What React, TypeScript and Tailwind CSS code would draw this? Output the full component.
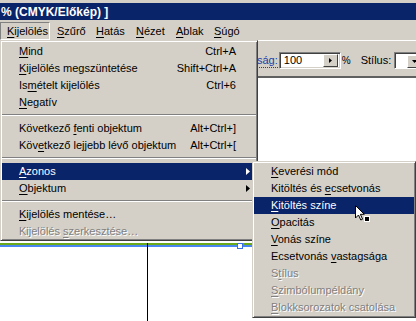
import React from 'react'

type Entry =
  | { sep: true }
  | {
      sep?: false
      text: string
      u: number
      shortcut?: string
      sub?: boolean
      active?: boolean
      disabled?: boolean
    }

const mainMenu: Entry[] = [
  { text: 'Mind', u: 0, shortcut: 'Ctrl+A' },
  { text: 'Kijelölés megszüntetése', u: 0, shortcut: 'Shift+Ctrl+A' },
  { text: 'Ismételt kijelölés', u: 2, shortcut: 'Ctrl+6' },
  { text: 'Negatív', u: 0 },
  { sep: true },
  { text: 'Következő fenti objektum', u: 10, shortcut: 'Alt+Ctrl+]' },
  { text: 'Következő lejjebb lévő objektum', u: 3, shortcut: 'Alt+Ctrl+[' },
  { sep: true },
  { text: 'Azonos', u: 0, sub: true, active: true },
  { text: 'Objektum', u: 0, sub: true },
  { sep: true },
  { text: 'Kijelölés mentése…', u: 0 },
  { text: 'Kijelölés szerkesztése…', u: 10, disabled: true },
]

const subMenu: Entry[] = [
  { text: 'Keverési mód', u: 0 },
  { text: 'Kitöltés és ecsetvonás', u: 12 },
  { text: 'Kitöltés színe', u: 0, active: true },
  { text: 'Opacitás', u: 0 },
  { text: 'Vonás színe', u: 0 },
  { text: 'Ecsetvonás vastagsága', u: 11 },
  { text: 'Stílus', u: 1, disabled: true },
  { text: 'Szimbólumpéldány', u: 0, disabled: true },
  { text: 'Blokksorozatok csatolása', u: 0, disabled: true },
]

const menuBar = [
  { text: 'Kijelölés', w: 'w-[50px]', open: true },
  { text: 'Szűrő', w: 'w-[39px]' },
  { text: 'Hatás', w: 'w-[40px]' },
  { text: 'Nézet', w: 'w-[40px]' },
  { text: 'Ablak', w: 'w-[38px]' },
  { text: 'Súgó', w: 'w-[40px]' },
]

function Label({ text, u }: { text: string; u: number }) {
  return (
    <>
      {text.slice(0, u)}
      <span className="underline decoration-1 underline-offset-[2px]">{text[u]}</span>
      {text.slice(u + 1)}
    </>
  )
}

function Arrow({ white }: { white?: boolean }) {
  return (
    <svg width="4" height="7" viewBox="0 0 4 7" className="absolute right-[6px] top-[5px]">
      <path d="M0 0 L4 3.5 L0 7 Z" fill={white ? '#fff' : '#000'} />
    </svg>
  )
}

function Menu({ items, className }: { items: Entry[]; className: string }) {
  return (
    <div
      className={`absolute bg-[#d4d0c8] border border-t-[#d4d0c8] border-l-[#d4d0c8] border-r-[#404040] border-b-[#404040] shadow-[inset_1px_1px_0_#fff,inset_-1px_-1px_0_#808080] ${className}`}
    >
      {items.map((it, i) =>
        it.sep ? (
          <div key={i} className="h-[9px] pt-[3px]">
            <div className="h-px bg-[#808080]" />
            <div className="h-px bg-white" />
          </div>
        ) : (
          <div
            key={i}
            className={`relative h-[17px] flex items-center pl-[17px] pr-[20px] whitespace-nowrap ${
              it.active ? 'bg-[#0a246a] text-white' : it.disabled ? 'text-[#808080] [text-shadow:1px_1px_0_#fff]' : 'text-black'
            }`}
          >
            <span className="flex-1">
              <Label text={it.text} u={it.u} />
            </span>
            {it.shortcut && <span>{it.shortcut}</span>}
            {it.sub && <Arrow white={it.active} />}
          </div>
        )
      )}
    </div>
  )
}

export default function App() {
  return (
    <div className="relative w-[416px] h-[321px] overflow-hidden bg-white text-[11px] leading-none font-['Liberation_Sans',Arial,sans-serif] select-none">
      <div className="flex flex-col h-full">
        {/* window frame + title */}
        <div className="h-[3px] bg-[#d4d0c8]" />
        <div className="h-[17px] bg-[#0a246a] text-white font-bold text-[12px] flex items-center pl-[1px]">
          % (CMYK/Előkép) ]
        </div>

        {/* menu bar */}
        <div className="h-[20px] bg-[#d4d0c8] flex items-end">
          {menuBar.map((m) => (
            <div
              key={m.text}
              className={`${m.w} h-[18px] flex items-center pl-[6px] ${
                m.open ? 'border border-t-[#808080] border-l-[#808080] border-r-white border-b-white pl-[5px] w-[49px] mr-[1px]' : ''
              }`}
            >
              <Label text={m.text} u={0} />
            </div>
          ))}
        </div>

        {/* toolbar */}
        <div className="h-[38px] bg-[#d4d0c8] border-t border-t-white border-b-2 border-b-[#606060] flex items-start pt-[11px] pl-[257px] whitespace-nowrap overflow-hidden">
          <span className="shrink-0 text-[#2040a8] mt-[3px] pb-[1px] border-b border-dotted border-b-[#2040a8]">ság:</span>
          <div className="shrink-0 ml-[1px] w-[62px] h-[17px] bg-white border border-t-[#808080] border-l-[#808080] border-r-white border-b-white shadow-[inset_1px_1px_0_#404040,inset_-1px_-1px_0_#d4d0c8] flex items-center justify-between pl-[4px] pr-[2px]">
            <span>100</span>
            <div className="w-[15px] h-[13px] bg-[#d4d0c8] border border-t-white border-l-white border-r-[#404040] border-b-[#404040] flex items-center justify-center">
              <svg width="3" height="5" viewBox="0 0 3 5">
                <path d="M0 0 L3 2.5 L0 5 Z" fill="#000" />
              </svg>
            </div>
          </div>
          <span className="shrink-0 ml-[1px] mt-[4px] text-[10px]">%</span>
          <span className="shrink-0 ml-[10px] mt-[3px]">Stílus:</span>
          <div className="shrink-0 ml-[3px] w-[36px] h-[17px] bg-white border border-t-[#808080] border-l-[#808080] border-r-white border-b-white shadow-[inset_1px_1px_0_#404040] flex items-center pl-[12px] pt-[1px]">
            <div className="w-[14px] h-[13px] bg-[#d4d0c8] border border-t-white border-l-white border-r-[#404040] border-b-[#404040] flex items-center justify-center">
              <svg width="5" height="3" viewBox="0 0 5 3">
                <path d="M0 0 L5 0 L2.5 3 Z" fill="#000" />
              </svg>
            </div>
          </div>
        </div>

        {/* canvas */}
        <div className="relative flex-1 bg-white">
          <div className="absolute left-0 right-0 top-[165px] h-[2px] bg-[#6aaa1a]" />
          <div className="absolute left-0 right-0 top-[167px] h-[2px] bg-[#4a86f0]" />
          <div className="absolute left-[147px] top-[165px] bottom-0 w-px bg-black" />
          <div className="absolute left-[237px] top-[165px] w-[6px] h-[6px] bg-white border border-[#3a70e8]" />
        </div>
      </div>

      <Menu items={mainMenu} className="left-0 top-[40px] w-[258px] px-[1px] pt-[2px]" />
      <Menu items={subMenu} className="left-[252px] top-[161px] w-[164px] p-[1px]" />

      {/* mouse pointer */}
      <svg className="absolute left-[355px] top-[205px]" width="16" height="18" viewBox="0 0 16 18">
        <path d="M0.5 0.5 L0.5 13 L3.5 10 L5.8 15 L7.6 14.2 L5.4 9.3 L9.3 9.3 Z" fill="#fff" stroke="#000" strokeWidth="1" />
        <rect x="9.5" y="11.5" width="5" height="5" fill="#000" stroke="#fff" strokeWidth="1" />
      </svg>
    </div>
  )
}
